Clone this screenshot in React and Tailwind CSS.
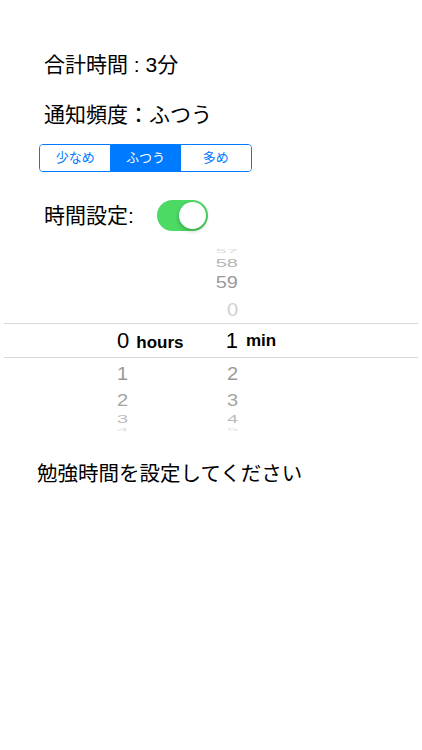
import React, { useState } from 'react';

const FONT = { fontFamily: '"Liberation Sans", "Noto Sans CJK JP", sans-serif' };

// wheel rows above / below the selected band
const rowsAbove = [
  { h: 'h-[10px]', hour: '', min: '57', scale: 'scale-y-[0.25]', color: 'text-[#dddddd]' },
  { h: 'h-[13px]', hour: '', min: '58', scale: 'scale-y-[0.55]', color: 'text-[#b4b4b4]' },
  { h: 'h-[25px]', hour: '', min: '59', scale: 'scale-y-[0.85]', color: 'text-[#9a9a9a]' },
  { h: 'h-[29px]', hour: '', min: '0', scale: 'scale-y-[0.95]', color: 'text-[#d0d0d0]' },
];

const rowsBelow = [
  { h: 'h-[29px]', hour: '1', min: '2', scale: 'scale-y-[0.95]', color: 'text-[#9a9a9a]' },
  { h: 'h-[25px]', hour: '2', min: '3', scale: 'scale-y-[0.85]', color: 'text-[#a4a4a4]' },
  { h: 'h-[13px]', hour: '3', min: '4', scale: 'scale-y-[0.5]', color: 'text-[#bcbcbc]' },
  { h: 'h-[10px]', hour: '4', min: '5', scale: 'scale-y-[0.2]', color: 'text-[#dddddd]' },
];

function WheelRow({ row }) {
  return (
    <div className={`flex items-center ${row.h} ${row.color} text-[20px] leading-none`}>
      <div className={`flex w-full items-center ${row.scale}`}>
        <div className="w-[117px] shrink-0" />
        <div className="w-[70px] shrink-0 text-left">{row.hour}</div>
        <div className="w-[51px] shrink-0 text-right">{row.min}</div>
      </div>
    </div>
  );
}

export default function App() {
  const [freq, setFreq] = useState(1);
  const [on, setOn] = useState(true);
  const options = ['少なめ', 'ふつう', '多め'];

  return (
    <div className="w-[422px] h-[750px] bg-white text-black flex flex-col" style={FONT}>
      <div className="mt-[50px] pl-[44px] h-[30px] leading-[30px] text-[21px]">合計時間 : 3分</div>
      <div className="mt-[20px] pl-[44px] h-[30px] leading-[30px] text-[21px]">通知頻度：ふつう</div>

      {/* frequency segmented control */}
      <div className="mt-[14px] ml-[39px] flex w-[213px] h-[28px] rounded-[4px] border border-[#007AFF] overflow-hidden">
        {options.map((o, i) => (
          <button
            key={o}
            onClick={() => setFreq(i)}
            className={`flex-1 flex items-center justify-center text-[13px] ${
              freq === i ? 'bg-[#007AFF] text-white' : 'bg-white text-[#007AFF]'
            } ${i > 0 && freq !== i && freq !== i - 1 ? 'border-l border-[#007AFF]' : ''}`}
          >
            {o}
          </button>
        ))}
      </div>

      <div className="mt-[28px] pl-[44px] flex items-center h-[31px]">
        <span className="text-[21px] leading-none w-[113px]">時間設定:</span>
        <button
          onClick={() => setOn(!on)}
          className={`w-[51px] h-[31px] rounded-full p-[2px] flex ${on ? 'bg-[#4CD964] justify-end' : 'bg-[#e5e5e5] justify-start'}`}
        >
          <span className="w-[27px] h-[27px] rounded-full bg-white shadow-[0_2px_4px_rgba(0,0,0,0.25)]" />
        </button>
      </div>

      {/* countdown picker */}
      <div className="mt-[15px] flex flex-col">
        {rowsAbove.map((r) => (
          <WheelRow key={'a' + r.min} row={r} />
        ))}
        <div className="mx-[4px] h-[35px] border-y border-[#d8d8d8] flex items-center">
          <div className="w-[113px] shrink-0" />
          <div className="w-[70px] shrink-0 flex items-baseline">
            <span className="text-[22px] font-light">0</span>
            <span className="ml-[7px] text-[17px] font-bold">hours</span>
          </div>
          <div className="w-[51px] shrink-0 text-right text-[22px] font-light">1</div>
          <span className="ml-[8px] text-[17px] font-bold">min</span>
        </div>
        {rowsBelow.map((r) => (
          <WheelRow key={'b' + r.min} row={r} />
        ))}
      </div>

      <div className="mt-[24px] pl-[37px] h-[30px] leading-[30px] text-[20.5px]">勉強時間を設定してください</div>
    </div>
  );
}
